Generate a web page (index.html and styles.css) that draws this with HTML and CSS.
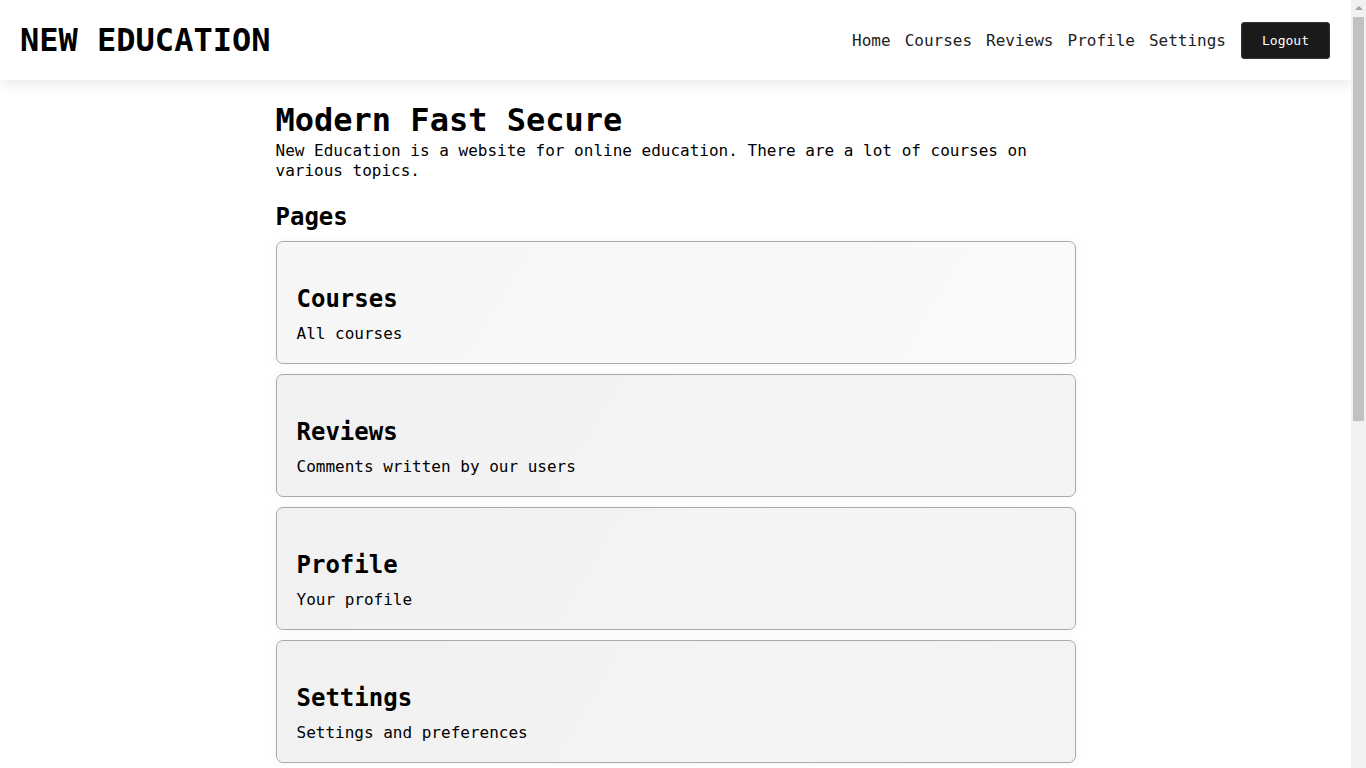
FILE: index.html
```html
<!DOCTYPE html>
<html lang="en">
<head>
<meta charset="utf-8">
<title>New Education</title>
<link rel="stylesheet" href="styles.css">
</head>
<body>
<div class="page">
<header class="topbar">
  <div class="brand">NEW EDUCATION</div>
  <nav class="nav">
    <a class="nav-link" href="#">Home</a>
    <a class="nav-link" href="#">Courses</a>
    <a class="nav-link" href="#">Reviews</a>
    <a class="nav-link" href="#">Profile</a>
    <a class="nav-link" href="#">Settings</a>
    <button class="logout">Logout</button>
  </nav>
</header>
<main class="main">
  <h1 class="hero-title">Modern Fast Secure</h1>
  <p class="hero-text">New Education is a website for online education. There are a lot of courses on various topics.</p>
  <h2 class="section-title">Pages</h2>
  <div class="cards">
    <a class="card card-light" href="#">
      <h3 class="card-title">Courses</h3>
      <p class="card-text">All courses</p>
    </a>
    <a class="card" href="#">
      <h3 class="card-title">Reviews</h3>
      <p class="card-text">Comments written by our users</p>
    </a>
    <a class="card" href="#">
      <h3 class="card-title">Profile</h3>
      <p class="card-text">Your profile</p>
    </a>
    <a class="card" href="#">
      <h3 class="card-title">Settings</h3>
      <p class="card-text">Settings and preferences</p>
    </a>
  </div>
</main>
</div>
<div class="scrollbar" aria-hidden="true">
  <div class="scroll-arrow"></div>
  <div class="scroll-thumb"></div>
</div>
</body>
</html>
```
FILE: styles.css
```css
* { box-sizing: border-box; }
html, body { height: 100%; overflow: hidden; }
body {
  margin: 0;
  display: flex;
  font-family: "DejaVu Sans Mono", "Liberation Mono", monospace;
  color: #000;
  background: #fff;
}
.page {
  flex: 1;
  min-width: 0;
  height: 100vh;
  overflow: hidden;
}
.scrollbar {
  width: 15px;
  flex: none;
  height: 100vh;
  background: #f1f1f1;
  display: flex;
  flex-direction: column;
  align-items: center;
}
.scroll-arrow {
  margin-top: 6px;
  width: 0;
  height: 0;
  border-left: 4px solid transparent;
  border-right: 4px solid transparent;
  border-bottom: 4px solid #a3a3a3;
}
.scroll-thumb {
  margin-top: 7px;
  width: 11px;
  height: 404px;
  background: #c1c1c1;
}
.topbar {
  height: 80px;
  display: flex;
  align-items: center;
  justify-content: space-between;
  padding: 0 21px 0 20px;
  background: #fff;
  box-shadow: 0 4px 14px rgba(0,0,0,0.09);
  position: relative;
  z-index: 1;
}
.brand {
  font-size: 32px;
  font-weight: bold;
  letter-spacing: 0;
}
.nav {
  display: flex;
  align-items: center;
  gap: 14px;
}
.nav-link {
  font-size: 16px;
  color: #222;
  text-decoration: none;
}
.logout {
  font-family: inherit;
  font-size: 13px;
  color: #fff;
  background: #1a1a1a;
  border: 1px solid #333;
  border-radius: 3px;
  height: 37px;
  width: 89px;
  padding: 0;
  margin-left: 1px;
  cursor: pointer;
}
.main {
  width: 800px;
  margin: 0 auto;
  padding-top: 24px;
}
.hero-title {
  font-size: 32px;
  font-weight: bold;
  line-height: 32px;
  margin: 0;
}
.hero-text {
  font-size: 16px;
  line-height: 20px;
  margin: 5px 0 0;
}
.section-title {
  font-size: 24px;
  font-weight: bold;
  line-height: 28px;
  margin: 22px 0 10px;
}
.cards {
  display: flex;
  flex-direction: column;
  gap: 10px;
}
.card {
  display: block;
  height: 123px;
  padding: 23px 20px 0;
  border: 1px solid #aaa;
  border-radius: 7px;
  background: linear-gradient(120deg, #f1f1f1 0%, #f4f4f4 60%, #f3f3f3 100%);
  box-shadow: 0 0 8px rgba(0,0,0,0.05);
  color: #000;
  text-decoration: none;
}
.card-light {
  background: linear-gradient(120deg, #f6f6f6 0%, #f8f8f8 60%, #fafafa 100%);
}
.card-title {
  font-size: 24px;
  font-weight: bold;
  line-height: 28px;
  margin: 20px 0 11px;
}
.card-text {
  font-size: 16px;
  line-height: 20px;
  margin: 0;
}
```
